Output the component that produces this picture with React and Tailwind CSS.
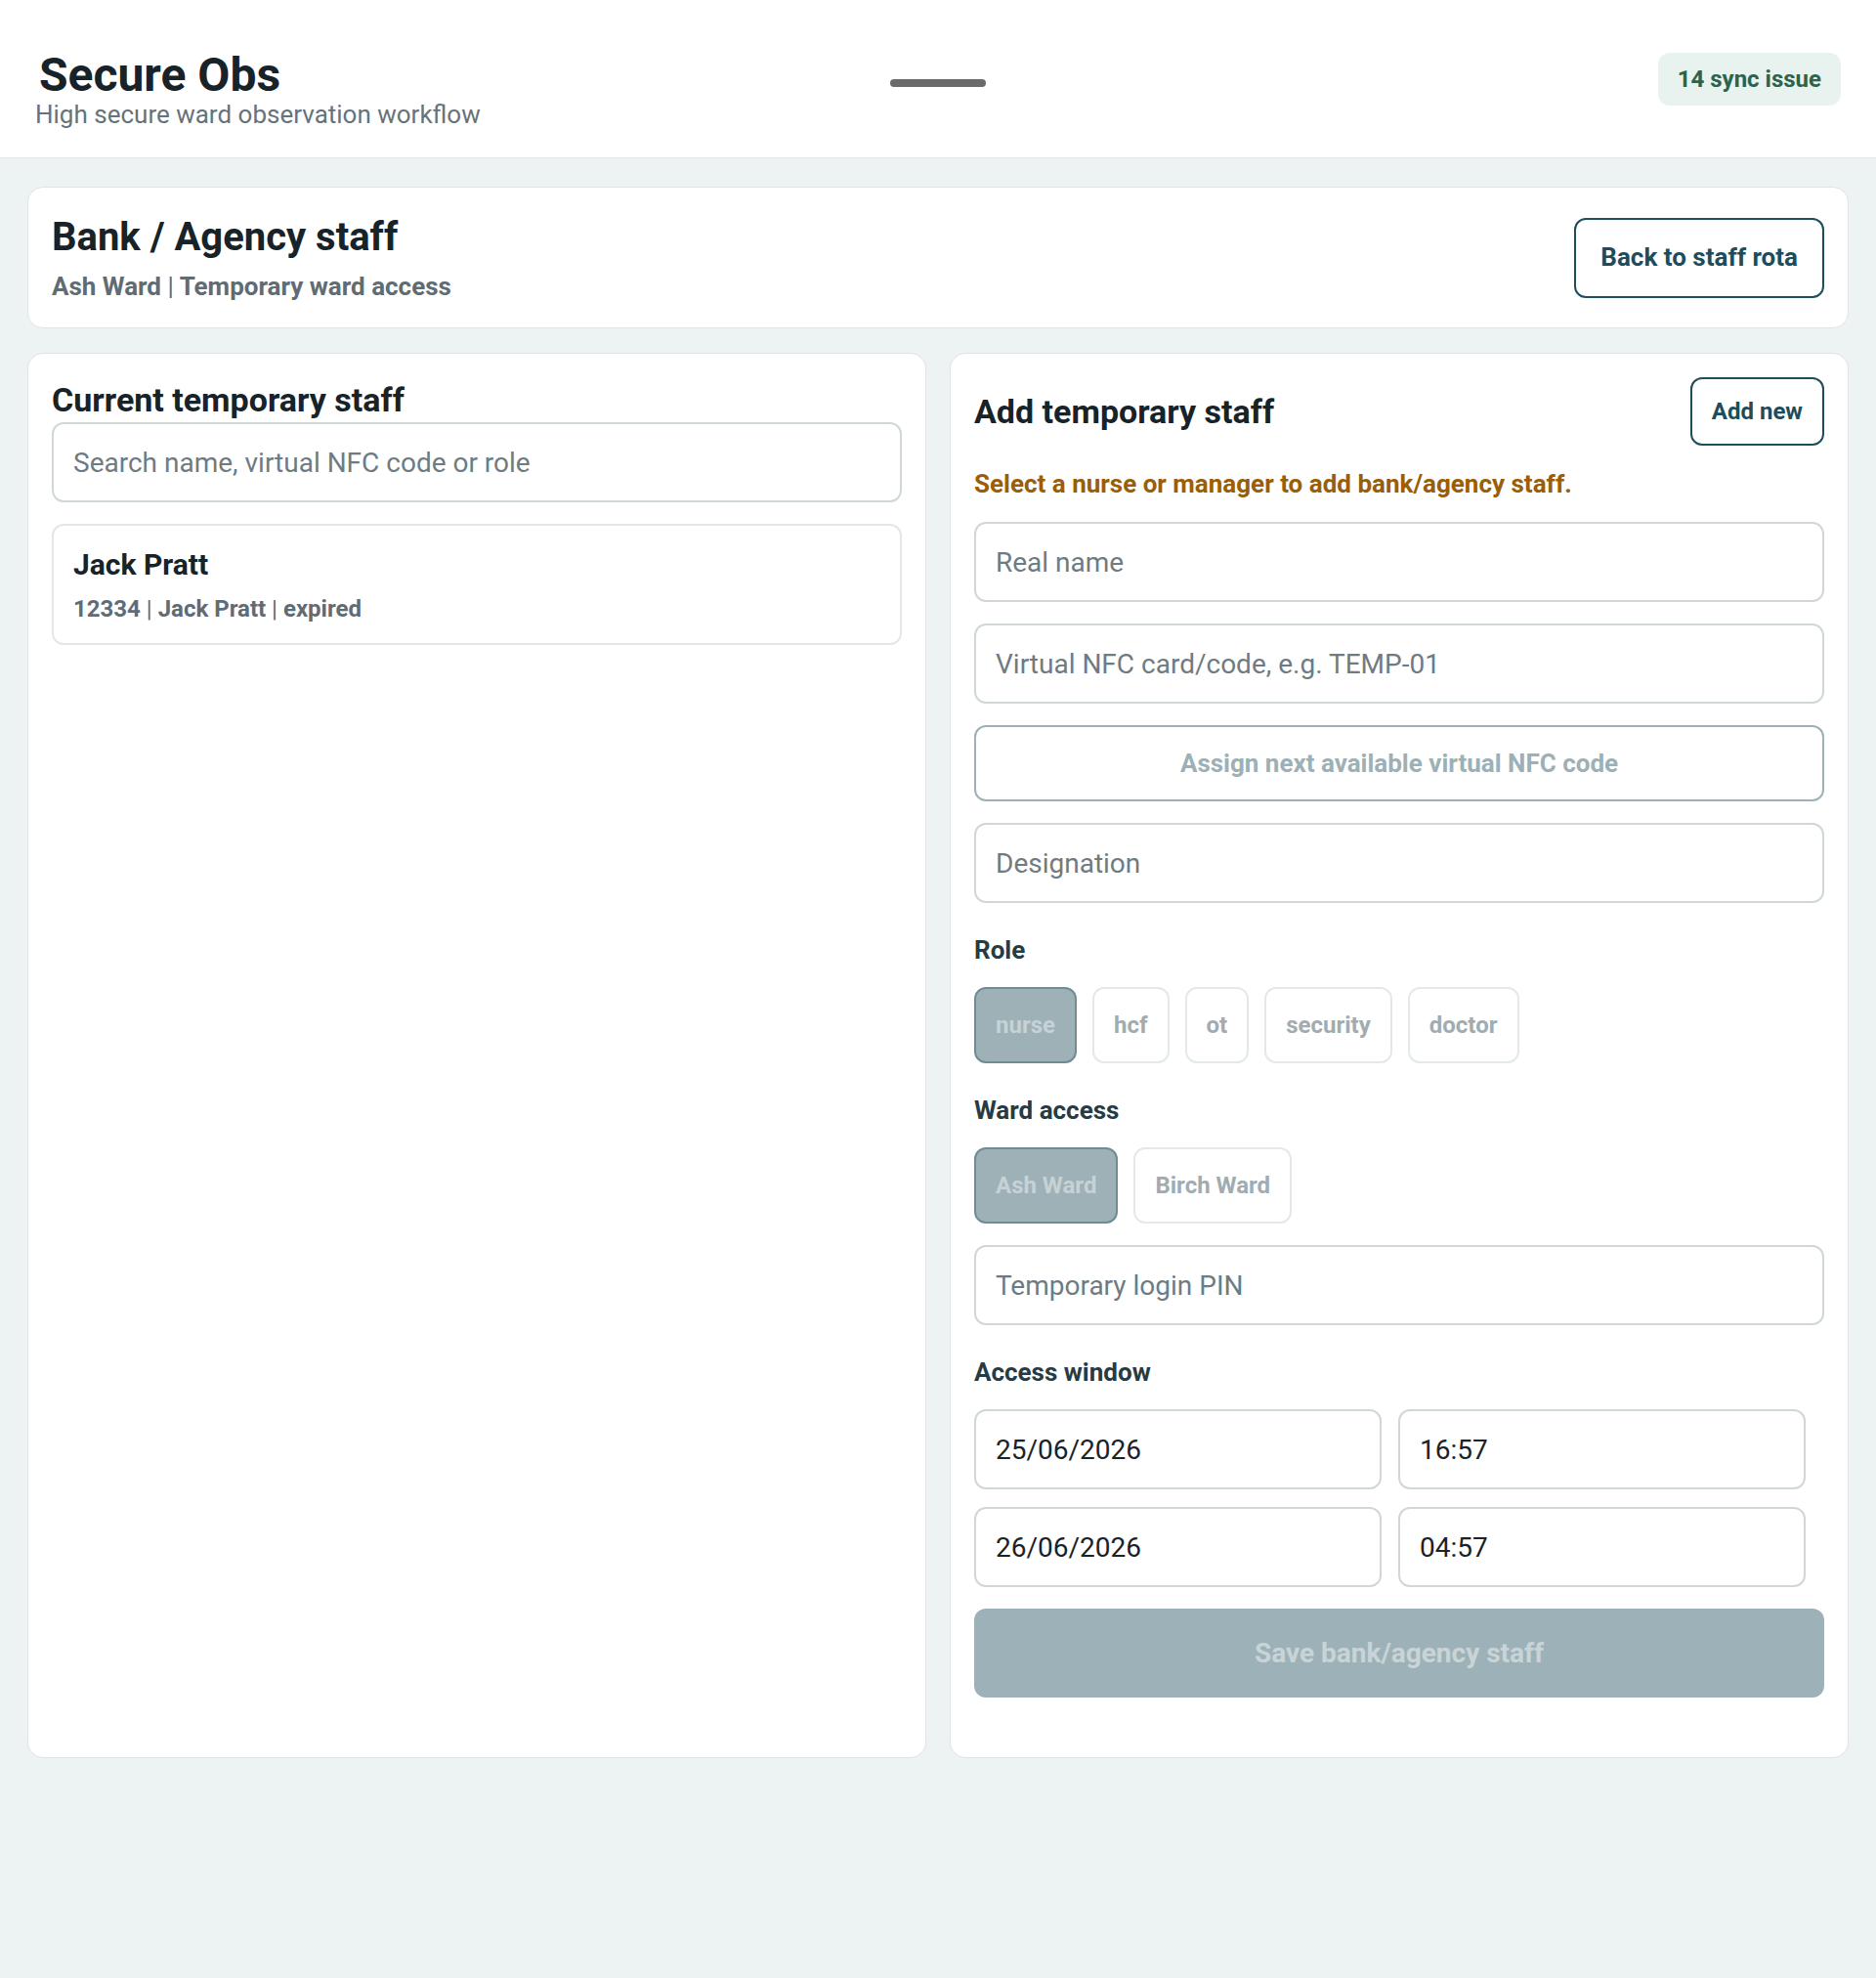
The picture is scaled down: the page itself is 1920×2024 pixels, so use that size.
import React, { useState } from 'react';

const roles = ['nurse', 'hcf', 'ot', 'security', 'doctor'];
const wards = ['Ash Ward', 'Birch Ward'];

// input standar form
function Field({ placeholder, value }) {
  return (
    <input
      type="text"
      defaultValue={value}
      placeholder={placeholder}
      className="h-[82px] w-full rounded-xl border-2 border-[#cfd7da] bg-white px-5 text-[28px] text-[#1a2328] outline-none placeholder:text-[#6f7b82]"
    />
  );
}

function Chip({ label, active, onClick }) {
  return (
    <button
      onClick={onClick}
      className={`h-[78px] rounded-xl border-2 px-5 text-[24px] font-bold ${
        active
          ? 'border-[#6f8b94] bg-[#9db1b7] text-[#c6d2d5]'
          : 'border-[#e3e8ea] bg-white text-[#a2acb0]'
      }`}
    >
      {label}
    </button>
  );
}

export default function App() {
  const [role, setRole] = useState('nurse');
  const [ward, setWard] = useState('Ash Ward');

  return (
    <div className="min-h-screen bg-[#edf2f2] font-[Roboto,'Noto_Sans',sans-serif] text-[#172329]">
      {/* Header */}
      <header className="grid h-[162px] grid-cols-[1fr_auto_1fr] items-center border-b border-[#e1e7e9] bg-white px-9">
        <div className="mt-5">
          <h1 className="ml-1 text-[48px] font-bold leading-[53px] text-[#172329]">Secure Obs</h1>
          <p className="text-[26px] leading-[29px] text-[#66737b]">High secure ward observation workflow</p>
        </div>
        <div className="mt-2 h-2 w-[98px] rounded-full bg-[#6b6b6b]" />
        <div className="justify-self-end">
          <span className="flex h-[54px] items-center rounded-xl bg-[#e8f2ee] px-5 text-[24px] font-bold text-[#2b634f]">
            14 sync issue
          </span>
        </div>
      </header>

      <main className="px-7 pt-[29px] pb-10">
        {/* Page title */}
        <div className="flex items-center justify-between rounded-2xl border border-[#dfe5e7] bg-white p-6">
          <div>
            <h2 className="text-[40px] font-bold leading-[54px] text-[#172329]">Bank / Agency staff</h2>
            <p className="mt-[5px] text-[26px] font-bold leading-[36px] text-[#5f6c74]">
              Ash Ward <span className="font-normal">|</span> Temporary ward access
            </p>
          </div>
          <button className="h-[82px] rounded-xl border-2 border-[#1f4e5b] px-[25px] text-[26px] font-bold text-[#1d4d5c]">
            Back to staff rota
          </button>
        </div>

        <div className="mt-[25px] grid grid-cols-2 gap-6">
          {/* Kiri */}
          <section className="rounded-2xl border border-[#dfe5e7] bg-white p-6">
            <h3 className="text-[34px] font-bold leading-[46px] text-[#172329]">Current temporary staff</h3>
            <Field placeholder="Search name, virtual NFC code or role" />
            <div className="mt-[22px] rounded-xl border-2 border-[#e2e7e9] px-5 pt-[22px] pb-5">
              <div className="text-[30px] font-bold leading-[36px] text-[#172329]">Jack Pratt</div>
              <div className="mt-3 text-[24px] font-bold leading-[30px] text-[#5f6c74]">
                12334 <span className="font-normal">|</span> Jack Pratt <span className="font-normal">|</span> expired
              </div>
            </div>
          </section>

          {/* Kanan */}
          <section className="flex flex-col gap-[22px] rounded-2xl border border-[#dfe5e7] bg-white p-6 pb-[61px]">
            <div className="flex h-[70px] items-center justify-between">
              <h3 className="text-[34px] font-bold leading-[46px] text-[#172329]">Add temporary staff</h3>
              <button className="h-[70px] rounded-xl border-2 border-[#1f4e5b] px-5 text-[24px] font-bold text-[#1d4d5c]">
                Add new
              </button>
            </div>
            <p className="text-[26px] font-bold leading-[34px] text-[#9b5e08]">
              Select a nurse or manager to add bank/agency staff.
            </p>
            <Field placeholder="Real name" />
            <Field placeholder="Virtual NFC card/code, e.g. TEMP-01" />
            <button className="h-[78px] w-full rounded-xl border-2 border-[#9fb1b7] bg-white text-[26px] font-bold text-[#9cb0b6]">
              Assign next available virtual NFC code
            </button>
            <Field placeholder="Designation" />

            <div className="mt-[10px] text-[26px] font-bold leading-[32px] text-[#263b43]">Role</div>
            <div className="flex gap-4">
              {roles.map((r) => (
                <Chip key={r} label={r} active={role === r} onClick={() => setRole(r)} />
              ))}
            </div>

            <div className="mt-[10px] text-[26px] font-bold leading-[32px] text-[#263b43]">Ward access</div>
            <div className="flex gap-4">
              {wards.map((w) => (
                <Chip key={w} label={w} active={ward === w} onClick={() => setWard(w)} />
              ))}
            </div>

            <Field placeholder="Temporary login PIN" />

            <div className="mt-[10px] text-[26px] font-bold leading-[32px] text-[#263b43]">Access window</div>
            <div className="grid grid-cols-[417px_417px] gap-x-[17px] gap-y-[18px]">
              <Field value="25/06/2026" />
              <Field value="16:57" />
              <Field value="26/06/2026" />
              <Field value="04:57" />
            </div>

            <button className="h-[91px] w-full rounded-xl bg-[#9db2b8] text-[28px] font-bold text-[#c9d4d7]">
              Save bank/agency staff
            </button>
          </section>
        </div>
      </main>
    </div>
  );
}
